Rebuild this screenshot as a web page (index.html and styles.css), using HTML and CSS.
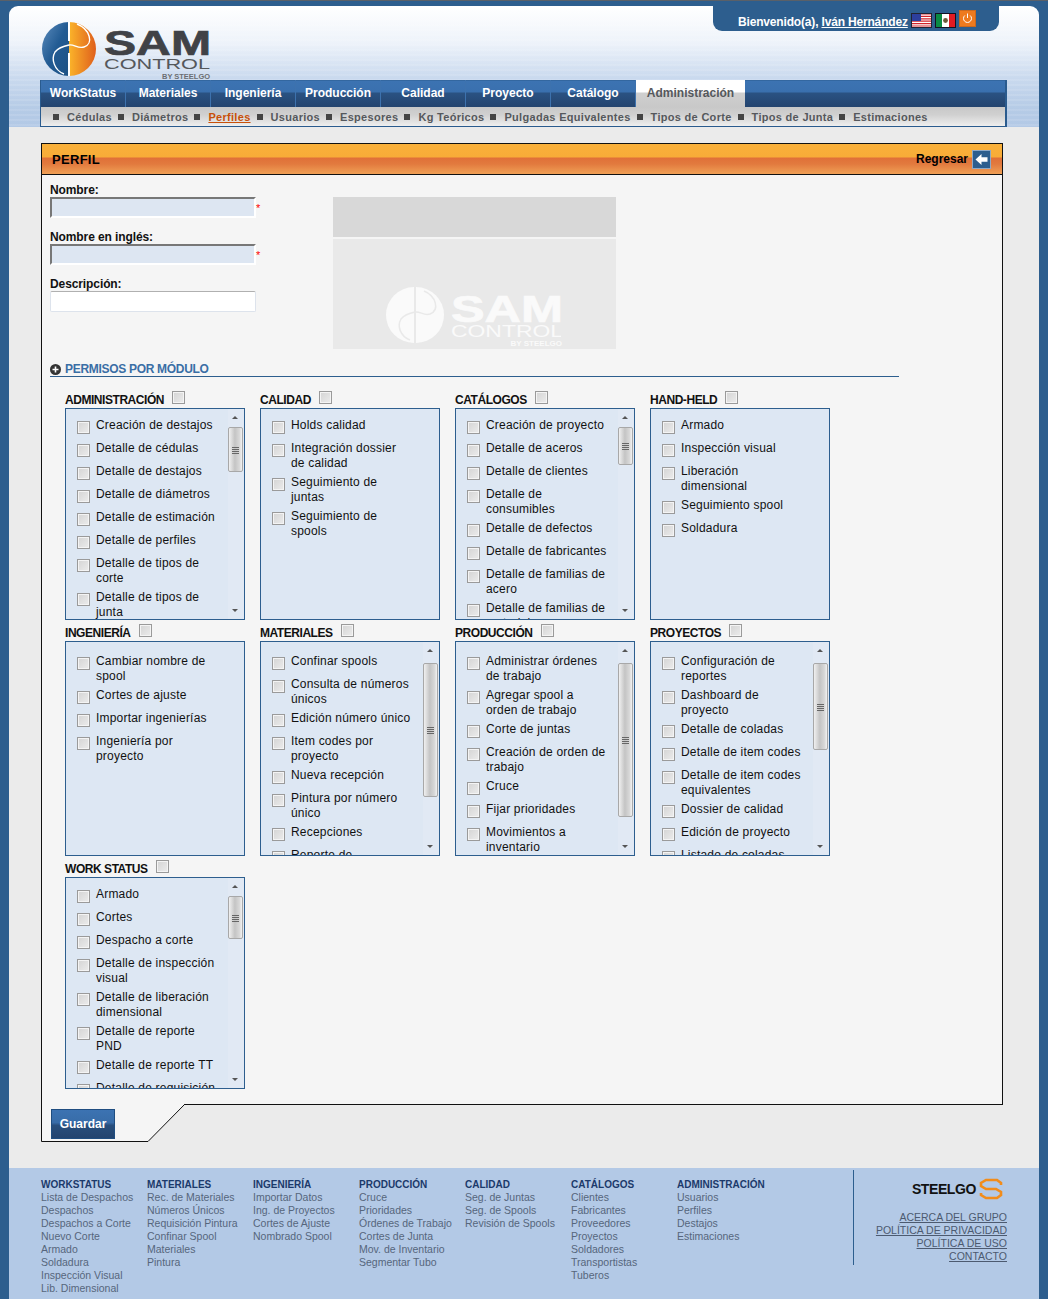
FILE: index.html
```html
<!DOCTYPE html>
<html lang="es">
<head>
  <meta charset="UTF-8">
  <title>Perfil - SAM Control</title>
  <link rel="stylesheet" href="styles.css">
</head>
<body>
<div class="page">

  <header class="header">
    <svg class="logo" viewBox="0 0 175 60" width="175" height="60">
      <defs>
        <linearGradient id="logoBlue" x1="0" y1="0" x2="1" y2="1"><stop offset="0" stop-color="#5c8cbd"/><stop offset="0.5" stop-color="#225b93"/><stop offset="1" stop-color="#1d5184"/></linearGradient>
        <linearGradient id="logoOrange" x1="0" y1="0" x2="1" y2="0"><stop offset="0" stop-color="#fbb42a"/><stop offset="1" stop-color="#df5f1c"/></linearGradient>
      </defs>
      <path d="M29 2A27 27 0 0 0 29 56Z" fill="url(#logoBlue)"/>
      <path d="M29 2A27 27 0 0 1 29 56Z" fill="url(#logoOrange)"/>
      <path class="logo-cut" d="M29 2V21M29 33V56"/>
      <path class="logo-cut thin" d="M37 4C50 9 54 24 44 27C38 29 34 24 29 25C24 26 19 27 15 32C11 39 14 50 24 54"/>
      <text class="logo-sam" x="64" y="35" textLength="107" lengthAdjust="spacingAndGlyphs">SAM</text>
      <text class="logo-control" x="64" y="49" textLength="106" lengthAdjust="spacingAndGlyphs">CONTROL</text>
      <text class="logo-by" x="122" y="59" textLength="48" lengthAdjust="spacingAndGlyphs">BY STEELGO</text>
    </svg>

    <div class="welcome">
      <span>Bienvenido(a), <a href="#">Iván Hernández</a></span>
      <svg class="flag" viewBox="0 0 21 15" width="21" height="15">
        <rect width="21" height="15" fill="#fff"/>
        <path d="M0 1H21M0 3.4H21M0 5.8H21M0 8.2H21M0 10.6H21M0 13H21" stroke="#d2232a" stroke-width="1.2"/>
        <rect width="10" height="8" fill="#2d3f9e"/>
        <rect x="0.5" y="0.5" width="20" height="14" fill="none" stroke="#223"/>
      </svg>
      <svg class="flag" viewBox="0 0 21 15" width="21" height="15">
        <rect width="7" height="15" fill="#0a8a43"/>
        <rect x="7" width="7" height="15" fill="#fff"/>
        <rect x="14" width="7" height="15" fill="#e11b22"/>
        <circle cx="10.5" cy="7.5" r="2.4" fill="#6b5a3a"/>
        <rect x="0.5" y="0.5" width="20" height="14" fill="none" stroke="#112"/>
      </svg>
      <svg class="power" viewBox="0 0 17 17" width="17" height="17">
        <rect x="0.5" y="0.5" width="16" height="16" fill="#ee7a1e" stroke="#c9691f"/>
        <path d="M5.8 5.5A4 4 0 1 0 11.2 5.5M8.5 3.5V8" fill="none" stroke="#fff" stroke-width="1"/>
      </svg>
    </div>

    <nav class="nav">
      <div class="tabs">
        <a class="tab" href="#">WorkStatus</a>
        <a class="tab" href="#">Materiales</a>
        <a class="tab" href="#">Ingeniería</a>
        <a class="tab" href="#">Producción</a>
        <a class="tab" href="#">Calidad</a>
        <a class="tab" href="#">Proyecto</a>
        <a class="tab" href="#">Catálogo</a>
        <a class="tab tab-active" href="#">Administración</a>
      </div>
      <div class="subnav">
        <a href="#">Cédulas</a>
        <a href="#">Diámetros</a>
        <a class="current" href="#">Perfiles</a>
        <a href="#">Usuarios</a>
        <a href="#">Espesores</a>
        <a href="#">Kg Teóricos</a>
        <a href="#">Pulgadas Equivalentes</a>
        <a href="#">Tipos de Corte</a>
        <a href="#">Tipos de Junta</a>
        <a href="#">Estimaciones</a>
      </div>
    </nav>
  </header>

  <main class="main">
    <section class="panel">
      <div class="panel-head">
        <h1>PERFIL</h1>
        <a class="back" href="#">Regresar
          <svg viewBox="0 0 19 19" width="19" height="19">
            <rect x="0.5" y="0.5" width="18" height="18" fill="#2d5e8e" stroke="#8fa9c6"/>
            <path d="M3.5 9.5L9.5 4V7.2H15.5V11.8H9.5V15Z" fill="#fff"/>
          </svg>
        </a>
      </div>

      <div class="panel-body">
        <div class="top-row">
          <form class="fields">
            <label for="nombre">Nombre:</label>
            <div class="field"><input class="txt req" id="nombre" type="text"><span class="star">*</span></div>
            <label for="ingles">Nombre en inglés:</label>
            <div class="field"><input class="txt req" id="ingles" type="text"><span class="star">*</span></div>
            <label for="desc">Descripción:</label>
            <div class="field"><input class="txt" id="desc" type="text"></div>
          </form>
          <div class="picture">
            <div class="picture-top"></div>
            <div class="picture-main">
              <svg class="mark" viewBox="0 0 175 60" width="175" height="60">
                <path class="mark-fill" d="M28 1A28 28 0 0 0 28 57Z"/>
                <path class="mark-fill" d="M30 1A28 28 0 0 1 30 57Z"/>
                <path class="mark-cut" d="M38 5C50 10 54 24 44 28C38 30 34 25 29 26C24 27 19 28 15 33C11 40 14 50 24 54"/>
                <text class="mark-sam" x="65" y="36" textLength="112" lengthAdjust="spacingAndGlyphs">SAM</text>
                <text class="mark-control" x="65" y="51" textLength="112" lengthAdjust="spacingAndGlyphs">CONTROL</text>
              </svg>
              <span class="mark-by">BY STEELGO</span>
            </div>
          </div>
        </div>

        <h2 class="section-title">
          <svg viewBox="0 0 11 11" width="11" height="11"><circle cx="5.5" cy="5.5" r="5.5" fill="#333"/><path d="M5.5 2.5V8.5M2.5 5.5H8.5" stroke="#fff" stroke-width="1.6"/></svg>
          PERMISOS POR MÓDULO
        </h2>

        <div class="modules">

          <div class="module">
            <div class="module-title">ADMINISTRACIÓN <input type="checkbox" class="chk"></div>
            <div class="box">
              <ul>
                <li><input type="checkbox" class="chk"><span>Creación de destajos</span></li>
                <li><input type="checkbox" class="chk"><span>Detalle de cédulas</span></li>
                <li><input type="checkbox" class="chk"><span>Detalle de destajos</span></li>
                <li><input type="checkbox" class="chk"><span>Detalle de diámetros</span></li>
                <li><input type="checkbox" class="chk"><span>Detalle de estimación</span></li>
                <li><input type="checkbox" class="chk"><span>Detalle de perfiles</span></li>
                <li><input type="checkbox" class="chk"><span>Detalle de tipos de corte</span></li>
                <li><input type="checkbox" class="chk"><span>Detalle de tipos de junta</span></li>
              </ul>
              <div class="scroll"><i class="up"></i><b style="top:18px;height:45px"></b><i class="down"></i></div>
            </div>
          </div>

          <div class="module">
            <div class="module-title">CALIDAD <input type="checkbox" class="chk"></div>
            <div class="box">
              <ul>
                <li><input type="checkbox" class="chk"><span>Holds calidad</span></li>
                <li><input type="checkbox" class="chk"><span>Integración dossier de calidad</span></li>
                <li><input type="checkbox" class="chk"><span>Seguimiento de juntas</span></li>
                <li><input type="checkbox" class="chk"><span>Seguimiento de spools</span></li>
              </ul>
            </div>
          </div>

          <div class="module">
            <div class="module-title">CATÁLOGOS <input type="checkbox" class="chk"></div>
            <div class="box">
              <ul>
                <li><input type="checkbox" class="chk"><span>Creación de proyecto</span></li>
                <li><input type="checkbox" class="chk"><span>Detalle de aceros</span></li>
                <li><input type="checkbox" class="chk"><span>Detalle de clientes</span></li>
                <li><input type="checkbox" class="chk"><span>Detalle de consumibles</span></li>
                <li><input type="checkbox" class="chk"><span>Detalle de defectos</span></li>
                <li><input type="checkbox" class="chk"><span>Detalle de fabricantes</span></li>
                <li><input type="checkbox" class="chk"><span>Detalle de familias de acero</span></li>
                <li><input type="checkbox" class="chk"><span>Detalle de familias de material</span></li>
              </ul>
              <div class="scroll"><i class="up"></i><b style="top:18px;height:38px"></b><i class="down"></i></div>
            </div>
          </div>

          <div class="module">
            <div class="module-title">HAND-HELD <input type="checkbox" class="chk"></div>
            <div class="box">
              <ul>
                <li><input type="checkbox" class="chk"><span>Armado</span></li>
                <li><input type="checkbox" class="chk"><span>Inspección visual</span></li>
                <li><input type="checkbox" class="chk"><span>Liberación dimensional</span></li>
                <li><input type="checkbox" class="chk"><span>Seguimiento spool</span></li>
                <li><input type="checkbox" class="chk"><span>Soldadura</span></li>
              </ul>
            </div>
          </div>

          <div class="module">
            <div class="module-title">INGENIERÍA <input type="checkbox" class="chk"></div>
            <div class="box box-tall">
              <ul>
                <li><input type="checkbox" class="chk"><span>Cambiar nombre de spool</span></li>
                <li><input type="checkbox" class="chk"><span>Cortes de ajuste</span></li>
                <li><input type="checkbox" class="chk"><span>Importar ingenierías</span></li>
                <li><input type="checkbox" class="chk"><span>Ingeniería por proyecto</span></li>
              </ul>
            </div>
          </div>

          <div class="module">
            <div class="module-title">MATERIALES <input type="checkbox" class="chk"></div>
            <div class="box box-tall">
              <ul>
                <li><input type="checkbox" class="chk"><span>Confinar spools</span></li>
                <li><input type="checkbox" class="chk"><span>Consulta de números únicos</span></li>
                <li><input type="checkbox" class="chk"><span>Edición número único</span></li>
                <li><input type="checkbox" class="chk"><span>Item codes por proyecto</span></li>
                <li><input type="checkbox" class="chk"><span>Nueva recepción</span></li>
                <li><input type="checkbox" class="chk"><span>Pintura por número único</span></li>
                <li><input type="checkbox" class="chk"><span>Recepciones</span></li>
                <li><input type="checkbox" class="chk"><span>Reporte de materiales</span></li>
              </ul>
              <div class="scroll"><i class="up"></i><b style="top:21px;height:134px"></b><i class="down"></i></div>
            </div>
          </div>

          <div class="module">
            <div class="module-title">PRODUCCIÓN <input type="checkbox" class="chk"></div>
            <div class="box box-tall">
              <ul>
                <li><input type="checkbox" class="chk"><span>Administrar órdenes de trabajo</span></li>
                <li><input type="checkbox" class="chk"><span>Agregar spool a orden de trabajo</span></li>
                <li><input type="checkbox" class="chk"><span>Corte de juntas</span></li>
                <li><input type="checkbox" class="chk"><span>Creación de orden de trabajo</span></li>
                <li><input type="checkbox" class="chk"><span>Cruce</span></li>
                <li><input type="checkbox" class="chk"><span>Fijar prioridades</span></li>
                <li><input type="checkbox" class="chk"><span>Movimientos a inventario</span></li>
              </ul>
              <div class="scroll"><i class="up"></i><b style="top:21px;height:154px"></b><i class="down"></i></div>
            </div>
          </div>

          <div class="module">
            <div class="module-title">PROYECTOS <input type="checkbox" class="chk"></div>
            <div class="box box-tall">
              <ul>
                <li><input type="checkbox" class="chk"><span>Configuración de reportes</span></li>
                <li><input type="checkbox" class="chk"><span>Dashboard de proyecto</span></li>
                <li><input type="checkbox" class="chk"><span>Detalle de coladas</span></li>
                <li><input type="checkbox" class="chk"><span>Detalle de item codes</span></li>
                <li><input type="checkbox" class="chk"><span>Detalle de item codes equivalentes</span></li>
                <li><input type="checkbox" class="chk"><span>Dossier de calidad</span></li>
                <li><input type="checkbox" class="chk"><span>Edición de proyecto</span></li>
                <li><input type="checkbox" class="chk"><span>Listado de coladas</span></li>
              </ul>
              <div class="scroll"><i class="up"></i><b style="top:21px;height:87px"></b><i class="down"></i></div>
            </div>
          </div>

          <div class="module">
            <div class="module-title">WORK STATUS <input type="checkbox" class="chk"></div>
            <div class="box">
              <ul>
                <li><input type="checkbox" class="chk"><span>Armado</span></li>
                <li><input type="checkbox" class="chk"><span>Cortes</span></li>
                <li><input type="checkbox" class="chk"><span>Despacho a corte</span></li>
                <li><input type="checkbox" class="chk"><span>Detalle de inspección visual</span></li>
                <li><input type="checkbox" class="chk"><span>Detalle de liberación dimensional</span></li>
                <li><input type="checkbox" class="chk"><span>Detalle de reporte PND</span></li>
                <li><input type="checkbox" class="chk"><span>Detalle de reporte TT</span></li>
                <li><input type="checkbox" class="chk"><span>Detalle de requisición</span></li>
              </ul>
              <div class="scroll"><i class="up"></i><b style="top:18px;height:43px"></b><i class="down"></i></div>
            </div>
          </div>

        </div>
      </div>
    </section>

    <div class="save-tab">
      <svg class="save-shape" viewBox="0 0 145 38" width="145" height="38">
        <path d="M0.5 0V37.5H107L144 0" fill="#f5f5f5" stroke="#111"/>
      </svg>
      <button class="btn" type="button">Guardar</button>
    </div>
  </main>

  <footer class="footer">
    <div class="foot-cols">
      <div class="foot-col">
        <h4>WORKSTATUS</h4>
        <a href="#">Lista de Despachos</a><a href="#">Despachos</a><a href="#">Despachos a Corte</a><a href="#">Nuevo Corte</a><a href="#">Armado</a><a href="#">Soldadura</a><a href="#">Inspección Visual</a><a href="#">Lib. Dimensional</a>
      </div>
      <div class="foot-col">
        <h4>MATERIALES</h4>
        <a href="#">Rec. de Materiales</a><a href="#">Números Únicos</a><a href="#">Requisición Pintura</a><a href="#">Confinar Spool</a><a href="#">Materiales</a><a href="#">Pintura</a>
      </div>
      <div class="foot-col">
        <h4>INGENIERÍA</h4>
        <a href="#">Importar Datos</a><a href="#">Ing. de Proyectos</a><a href="#">Cortes de Ajuste</a><a href="#">Nombrado Spool</a>
      </div>
      <div class="foot-col">
        <h4>PRODUCCIÓN</h4>
        <a href="#">Cruce</a><a href="#">Prioridades</a><a href="#">Órdenes de Trabajo</a><a href="#">Cortes de Junta</a><a href="#">Mov. de Inventario</a><a href="#">Segmentar Tubo</a>
      </div>
      <div class="foot-col">
        <h4>CALIDAD</h4>
        <a href="#">Seg. de Juntas</a><a href="#">Seg. de Spools</a><a href="#">Revisión de Spools</a>
      </div>
      <div class="foot-col">
        <h4>CATÁLOGOS</h4>
        <a href="#">Clientes</a><a href="#">Fabricantes</a><a href="#">Proveedores</a><a href="#">Proyectos</a><a href="#">Soldadores</a><a href="#">Transportistas</a><a href="#">Tuberos</a>
      </div>
      <div class="foot-col">
        <h4>ADMINISTRACIÓN</h4>
        <a href="#">Usuarios</a><a href="#">Perfiles</a><a href="#">Destajos</a><a href="#">Estimaciones</a>
      </div>
    </div>
    <div class="foot-right">
      <div class="steelgo">
        <span>STEELGO</span>
        <svg viewBox="0 0 24 22" width="24" height="22">
          <path d="M22 7V5L18 2H7L2 5V8L7 11H17L22 14V17L18 20H7L2 17V15" fill="none" stroke="#f28c1a" stroke-width="2.6"/>
        </svg>
      </div>
      <a href="#">ACERCA DEL GRUPO</a>
      <a href="#">POLÍTICA DE PRIVACIDAD</a>
      <a href="#">POLÍTICA DE USO</a>
      <a href="#">CONTACTO</a>
    </div>
  </footer>

</div>
</body>
</html>
```

FILE: styles.css
```css
html, body {
  margin: 0;
  padding: 0;
}

body {
  background: #2d5e8e;
  border-top: 1px solid #5a6068;
  font-family: "Liberation Sans", Arial, sans-serif;
  font-size: 12px;
  color: #111;
}

a {
  color: inherit;
}

.page {
  margin: 5px 9px 0 9px;
  height: 1293px;
  overflow: hidden;
  border-radius: 9px 9px 0 0;
}

/* header */
.header {
  position: relative;
  height: 121px;
  padding: 14px 0 0 31px;
  box-sizing: border-box;
  background:
    repeating-linear-gradient(180deg, rgba(255,255,255,0) 0, rgba(255,255,255,0) 3px, rgba(255,255,255,0.1) 3px, rgba(255,255,255,0.1) 5px),
    linear-gradient(180deg, #fff 0, #eef3fa 30%, #c9d9ee 60%, #b5cbe6 85%, #b3c9e6 100%);
}

.logo {
  display: block;
}

.logo-cut {
  fill: none;
  stroke: #fff;
  stroke-width: 2;
}

.logo-cut.thin {
  stroke-width: 1.4;
}

.logo-sam {
  font-family: "Liberation Sans", sans-serif;
  font-weight: bold;
  font-size: 35px;
  fill: #404247;
  stroke: #404247;
  stroke-width: 0.7;
}

.logo-control {
  font-family: "Liberation Sans", sans-serif;
  font-size: 14px;
  fill: #55585c;
}

.logo-by {
  font-family: "Liberation Sans", sans-serif;
  font-weight: bold;
  font-size: 8px;
  fill: #6b6e72;
}

.welcome {
  position: absolute;
  top: 0;
  left: 704px;
  width: 286px;
  height: 25px;
  box-sizing: border-box;
  padding: 2px 0 0 25px;
  display: flex;
  align-items: flex-start;
  gap: 3px;
  background: #2d5e8e;
  border-radius: 0 0 9px 9px;
  color: #fff;
  font-weight: bold;
  font-size: 12px;
}

.welcome span {
  margin-top: 7px;
  letter-spacing: -0.17px;
}

.flag {
  margin-top: 5px;
}

.power {
  margin: 2px 0 0 0;
}

.nav {
  width: 967px;
  height: 47px;
  box-sizing: border-box;
  border: 1px solid #2a5b8e;
  border-top: 0;
  border-right-width: 2px;
  border-bottom-width: 1px;
}

.tabs {
  display: flex;
  height: 27px;
  background: linear-gradient(180deg, #2a5b8e 0, #3c73b2 1px, #3a70ae 12px, #2a5282 13px, #23446f 100%);
}

.tab {
  width: 84px;
  border-right: 1px solid #3d72ae;
  color: #fff;
  font-weight: bold;
  font-size: 12px;
  line-height: 27px;
  text-align: center;
  text-decoration: none;
}

.tab-active {
  width: 109px;
  margin-left: 0;
  border-right: 0;
  color: #55585c;
  background: linear-gradient(180deg, #fff 0, #fff 12px, #cfcfcf 13px, #c8c8c8 100%);
}

.subnav {
  display: flex;
  height: 19px;
  padding-left: 12px;
  align-items: center;
  background: linear-gradient(180deg, #c8c8c8 0, #d0d0d0 40%, #eeeeee 100%);
  font-size: 11px;
  font-weight: bold;
  letter-spacing: 0.3px;
  color: #55585c;
}

.subnav a {
  display: flex;
  align-items: center;
  text-decoration: none;
  margin-right: 6px;
}

.subnav a::before {
  content: "";
  width: 6px;
  height: 6px;
  margin-right: 8px;
  background: #444;
}

.subnav a.current {
  color: #c8500a;
  text-decoration: underline;
}

/* main area */
.main {
  background: #ebebeb;
  height: 1041px;
  box-sizing: border-box;
  padding: 16px 0 0 32px;
}

.panel {
  width: 962px;
  box-sizing: border-box;
  border: 1px solid #111;
  background: #f5f5f5;
}

.panel-head {
  display: flex;
  justify-content: space-between;
  align-items: center;
  height: 30px;
  padding: 0 11px 0 10px;
  border-bottom: 1px solid #111;
  background: linear-gradient(180deg, #f9b03a 0, #f8ac38 13px, #e07038 14px, #e27a3e 20px, #f0a056 100%);
}

.panel-head h1 {
  margin: 0;
  font-size: 13px;
  letter-spacing: 0.3px;
  color: #000;
}

.back {
  display: flex;
  align-items: center;
  gap: 4px;
  color: #000;
  font-weight: bold;
  text-decoration: none;
}

.panel-body {
  padding: 8px 0 15px 8px;
}

.top-row {
  display: flex;
}

.fields {
  width: 283px;
}

.fields label {
  display: block;
  font-weight: bold;
  font-size: 12px;
  line-height: 14px;
  letter-spacing: -0.1px;
}

.field {
  display: flex;
  height: 33px;
  align-items: flex-start;
}

.txt {
  width: 206px;
  height: 21px;
  margin: 0;
  padding: 0;
  box-sizing: border-box;
  background: #fff;
  border: 1px solid #dde3ec;
  border-top-color: #b0b0b0;
  border-radius: 2px;
}

.txt.req {
  background: #dde6f2;
  border: 2px solid #fff;
  border-top-color: #777;
  border-left-color: #777;
  border-radius: 0;
}

.star {
  color: #f00;
  font-size: 11px;
  line-height: 22px;
}

.picture {
  width: 283px;
  margin-top: 14px;
}

.picture-top {
  height: 40px;
  margin-bottom: 2px;
  background: #d8d8d8;
}

.picture-main {
  position: relative;
  height: 110px;
  background: #e9e9e9;
}

.mark {
  position: absolute;
  left: 53px;
  bottom: 3px;
}

.mark-fill {
  fill: #fafafa;
}

.mark-cut {
  fill: none;
  stroke: #e9e9e9;
  stroke-width: 1.5;
}

.mark-sam {
  font-weight: bold;
  font-size: 36px;
  fill: #fafafa;
  stroke: #fafafa;
  stroke-width: 0.7;
}

.mark-control {
  font-size: 16px;
  fill: #fafafa;
}

.mark-by {
  position: absolute;
  right: 54px;
  bottom: 1px;
  color: #fafafa;
  font-size: 8px;
  line-height: 9px;
  font-weight: bold;
}

.section-title {
  display: flex;
  align-items: center;
  gap: 4px;
  width: 849px;
  height: 14px;
  padding-top: 2px;
  margin: 11px 0 0 0;
  border-bottom: 1px solid #2d5e8e;
  font-size: 12px;
  font-weight: bold;
  color: #3a6ea5;
  letter-spacing: -0.3px;
}

/* permission boxes */
.modules {
  display: grid;
  grid-template-columns: repeat(4, 180px);
  column-gap: 15px;
  row-gap: 2px;
  margin: 12px 0 0 15px;
}

.module-title {
  display: flex;
  align-items: center;
  height: 17px;
  padding-top: 2px;
  font-weight: bold;
  font-size: 12px;
  letter-spacing: -0.45px;
  color: #111;
  gap: 8px;
  white-space: nowrap;
}

.module-title .chk {
  margin-top: -5px;
}

.chk {
  appearance: none;
  -webkit-appearance: none;
  flex: none;
  width: 13px;
  height: 13px;
  margin: 0;
  box-sizing: border-box;
  border: 1px solid #9a9a9a;
  background: linear-gradient(135deg, #d4d4d4 0, #ececec 100%);
  box-shadow: inset 0 0 0 1px #f4f4f4;
}

.box {
  position: relative;
  height: 212px;
  box-sizing: border-box;
  border: 1px solid #2d5e8e;
  background: #dde7f3;
  overflow: hidden;
}

.box-tall {
  height: 215px;
}

.box ul {
  list-style: none;
  margin: 0;
  padding: 9px 0 0 11px;
}

.box-tall ul {
  padding-top: 12px;
}

.box li {
  display: flex;
  align-items: flex-start;
  gap: 6px;
  width: 140px;
  min-height: 23px;
  box-sizing: border-box;
  padding-bottom: 4px;
  line-height: 15px;
  font-size: 12px;
  letter-spacing: 0.2px;
}

.box li .chk {
  margin-top: 3px;
}

.scroll {
  position: absolute;
  top: 0;
  right: 0;
  bottom: 0;
  width: 16px;
  background: #e1e9f4;
}

.scroll b {
  position: absolute;
  left: 0;
  width: 15px;
  box-sizing: border-box;
  border: 1px solid #a8a8a8;
  border-radius: 2px;
  background: linear-gradient(90deg, #f0f0f0 0, #c4c4c4 45%, #d8d8d8 80%, #f2f2f2 100%);
}

/* grip lines on the thumb */
.scroll b::after {
  content: "";
  position: absolute;
  top: 50%;
  left: 3px;
  width: 7px;
  height: 7px;
  margin-top: -3px;
  background: repeating-linear-gradient(180deg, #666 0, #666 1px, transparent 1px, transparent 2px);
}

.scroll i {
  position: absolute;
  left: 4px;
  width: 0;
  height: 0;
  border-left: 3px solid transparent;
  border-right: 3px solid transparent;
}

.scroll .up {
  top: 7px;
  border-bottom: 3px solid #555;
}

.scroll .down {
  bottom: 7px;
  border-top: 3px solid #555;
}

/* save tab */
.save-tab {
  position: relative;
  height: 37px;
  margin-top: -1px;
  padding: 5px 0 0 10px;
  box-sizing: border-box;
}

.save-shape {
  position: absolute;
  left: 0;
  top: 0;
}

.btn {
  position: relative;
  width: 64px;
  height: 30px;
  padding: 0;
  border: 1px solid #1f4d80;
  background: linear-gradient(180deg, #3c73b2 0, #386ca8 45%, #284e7c 55%, #23446f 100%);
  color: #fff;
  font-family: "Liberation Sans", Arial, sans-serif;
  font-size: 12px;
  font-weight: bold;
}

/* footer */
.footer {
  display: flex;
  justify-content: space-between;
  height: 131px;
  box-sizing: border-box;
  padding: 10px 32px 0 32px;
  background: #b3c9e6;
}

.foot-cols {
  display: flex;
}

.foot-col {
  width: 106px;
}

.foot-col h4 {
  margin: 0;
  font-size: 10px;
  line-height: 13px;
  color: #1c3a6b;
}

.foot-col a {
  display: block;
  font-size: 10.5px;
  line-height: 13px;
  color: #56667c;
  text-decoration: none;
  white-space: nowrap;
}

.foot-right {
  display: flex;
  flex-direction: column;
  align-items: flex-end;
  width: 154px;
  height: 95px;
  margin-top: -8px;
  box-sizing: border-box;
  padding-top: 8px;
  border-left: 1px solid #2d5e8e;
}

.foot-right a {
  font-size: 10.5px;
  line-height: 13px;
  color: #4c5a70;
}

.steelgo {
  display: flex;
  align-items: center;
  gap: 3px;
  height: 22px;
  margin: 0 4px 11px 0;
  font-size: 14px;
  font-weight: bold;
  color: #111;
  letter-spacing: -0.4px;
}
```
